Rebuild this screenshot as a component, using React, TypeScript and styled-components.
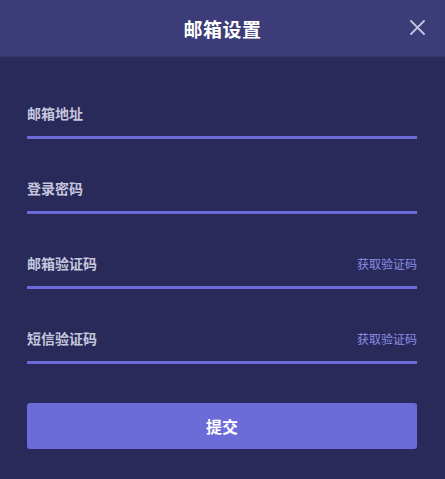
import React from "react";
import styled, { createGlobalStyle } from "styled-components";

const GlobalStyle = createGlobalStyle`
  html, body {
    margin: 0;
    padding: 0;
    background: #292a5a;
  }
  * {
    box-sizing: border-box;
  }
  body {
    font-family: "Noto Sans CJK SC", "Noto Sans", sans-serif;
  }
`;

const Dialog = styled.div`
  width: 445px;
  height: 479px;
  background: #292a5a;
  display: flex;
  flex-direction: column;
`;

const Header = styled.div`
  position: relative;
  height: 57px;
  background: #3b3c78;
  border-bottom: 1px solid #34356c;
  display: flex;
  align-items: center;
  justify-content: center;
`;

const Title = styled.div`
  color: #ffffff;
  font-size: 19px;
  font-weight: 700;
  letter-spacing: 0.5px;
`;

const CloseButton = styled.button`
  position: absolute;
  right: 20px;
  top: 19px;
  width: 16px;
  height: 16px;
  padding: 0;
  border: none;
  background: none;
  cursor: pointer;
  display: flex;
  align-items: center;
  justify-content: center;
`;

const Body = styled.form`
  flex: 1;
  padding: 46px 28px 0 27px;
  display: flex;
  flex-direction: column;
  gap: 39px;
`;

const Field = styled.div`
  display: flex;
  align-items: center;
  height: 36px;
  padding-bottom: 13px;
  border-bottom: 3px solid #6a6bd6;
`;

const Input = styled.input`
  flex: 1;
  min-width: 0;
  height: 20px;
  padding: 0;
  border: none;
  outline: none;
  background: transparent;
  color: #ffffff;
  font-family: inherit;
  font-size: 14px;
  font-weight: 700;

  &::placeholder {
    color: #c6c6de;
  }
`;

const CodeLink = styled.button`
  padding: 0;
  border: none;
  background: none;
  color: #8c8de6;
  font-family: inherit;
  font-size: 12px;
  cursor: pointer;
`;

const Submit = styled.button`
  height: 46px;
  border: none;
  border-radius: 3px;
  background: #6b6cd8;
  color: #ffffff;
  font-family: inherit;
  font-size: 16px;
  font-weight: 700;
  cursor: pointer;
`;

const fields = [
  { placeholder: "邮箱地址", code: false },
  { placeholder: "登录密码", code: false, type: "password" },
  { placeholder: "邮箱验证码", code: true },
  { placeholder: "短信验证码", code: true },
];

export default function App() {
  return (
    <>
      <GlobalStyle />
      <Dialog>
        <Header>
          <Title>邮箱设置</Title>
          <CloseButton type="button" aria-label="关闭">
            <svg width="15" height="15" viewBox="0 0 15 15">
              <path
                d="M1 1 L14 14 M14 1 L1 14"
                stroke="#c3c3e2"
                strokeWidth="1.8"
                strokeLinecap="round"
              />
            </svg>
          </CloseButton>
        </Header>
        <Body onSubmit={(e) => e.preventDefault()}>
          {fields.map((f) => (
            <Field key={f.placeholder}>
              <Input placeholder={f.placeholder} type={f.type || "text"} />
              {f.code && <CodeLink type="button">获取验证码</CodeLink>}
            </Field>
          ))}
          <Submit type="submit">提交</Submit>
        </Body>
      </Dialog>
    </>
  );
}
